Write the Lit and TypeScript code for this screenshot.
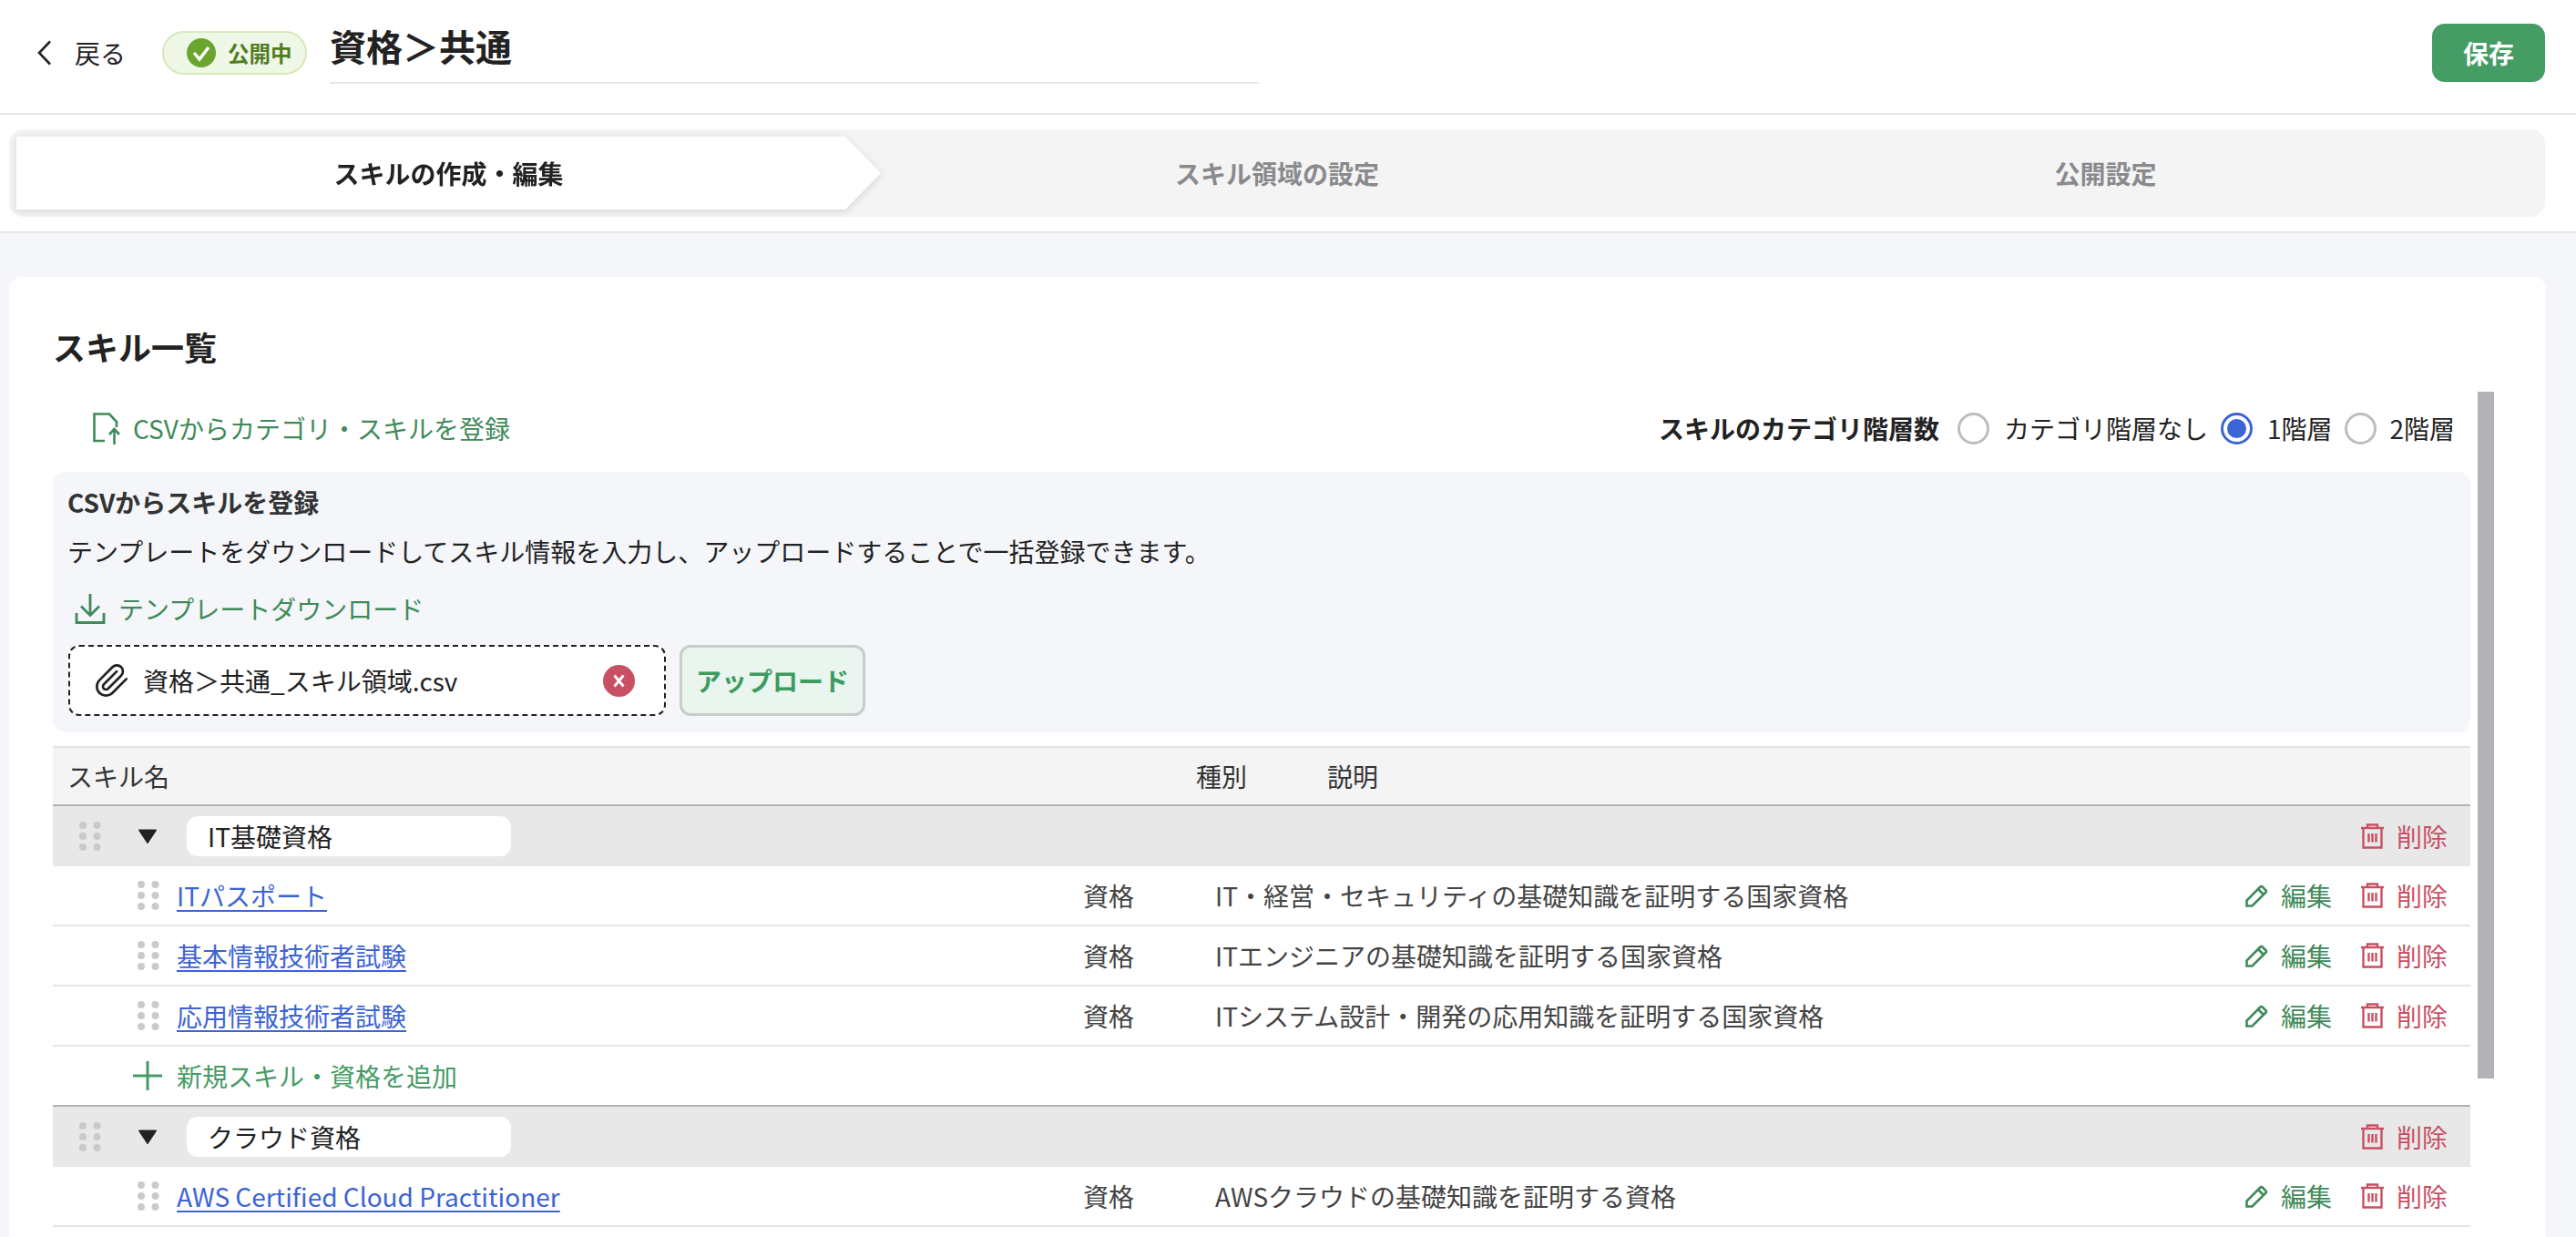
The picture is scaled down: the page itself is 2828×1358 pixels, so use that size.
// skill edit page
import { LitElement, html, css, svg } from 'lit';
import { customElement } from 'lit/decorators.js';

const chevron = html`<svg class="chevron" width="18" height="28" viewBox="0 0 18 28" fill="none" stroke="#222" stroke-width="2.6"><path d="M15 1.5 3 14l12 12.5"/></svg>`;
const checkCircle = html`<svg width="32" height="32" viewBox="0 0 32 32"><circle cx="16" cy="16" r="16" fill="#6aa52f"/><path d="M8 16l6 7 10-13" fill="none" stroke="#fff" stroke-width="3.4"/></svg>`;
const fileUp = html`<svg width="30" height="35" viewBox="0 0 30 35" fill="none" stroke="#3e8a58" stroke-width="2.6"><path d="M13 31H1.5V1.5H18L26 10v6"/><path d="M23.5 35V19"/><path d="M18 24l5.5-6 5.5 6"/></svg>`;
const download = html`<svg width="34" height="33" viewBox="0 0 34 33" fill="none" stroke="#3e8a58" stroke-width="2.8"><path d="M17 0v23"/><path d="M7 13.500l10 10 10-10"/><path d="M2 21v10.500h30V21"/></svg>`;
const clip = html`<svg width="40" height="40" viewBox="0 0 24 24" fill="none" stroke="#222" stroke-width="1.6" stroke-linecap="round"><path d="m21.440 11.050-9.190 9.190a6 6 0 0 1-8.490-8.490l8.570-8.570A4 4 0 1 1 18 8.840l-8.590 8.570a2 2 0 0 1-2.830-2.830l8.490-8.480"/></svg>`;
const clearIcon = html`<svg width="35" height="35" viewBox="0 0 35 35"><circle cx="17.500" cy="17.500" r="17.500" fill="#c94f62"/><path d="M12.500 11.500l10 12M22.500 11.500l-10 12" stroke="#fff" stroke-width="2.800"/></svg>`;
const plus = html`<svg width="32" height="32" viewBox="0 0 32 32" stroke="#459c64" stroke-width="3"><path d="M16 0v32M0 16h32"/></svg>`;
const triangle = html`<svg width="22" height="16" viewBox="0 0 22 16"><path d="M1 1.500a1 1 0 0 1 1-1h18a1 1 0 0 1 1 1L12 15a1 1 0 0 1-2 0z" fill="#222"/></svg>`;
const pencil = html`<svg width="25" height="25" viewBox="0 0 25 25" fill="none" stroke="#3e8a58" stroke-width="2.600"><path d="M1.500 23.500v-6L16.500 2.500a1.500 1.500 0 0 1 2.200 0l3.800 3.800a1.500 1.500 0 0 1 0 2.200L7.500 23.500z"/><path d="M14 5l6 6"/></svg>`;
const trash = html`<svg width="25" height="28" viewBox="0 0 25 28" fill="none" stroke="#c94f62" stroke-width="2.400"><path d="M7 4.500V1.500h11v3"/><path d="M0 5h25"/><path d="M2.500 5v21.500h20V5"/><path d="M8.500 11v9.500M12.500 11v9.500M16.500 11v9.500"/></svg>`;

const dotPositions = [4, 19.5].flatMap((x) => [4, 16, 28].map((y) => [x, y]));
const dots = html`<svg class="dots" width="24" height="32" viewBox="0 0 24 32">${dotPositions.map(([x, y]) => svg`<circle cx=${x} cy=${y} r="4" fill="#c9cacd"/>`)}</svg>`;

const groups = [
	{
		name: 'IT基礎資格',
		skills: [
			{ name: 'ITパスポート', type: '資格', desc: 'IT・経営・セキュリティの基礎知識を証明する国家資格' },
			{ name: '基本情報技術者試験', type: '資格', desc: 'ITエンジニアの基礎知識を証明する国家資格' },
			{ name: '応用情報技術者試験', type: '資格', desc: 'ITシステム設計・開発の応用知識を証明する国家資格' },
		],
		add: true,
	},
	{
		name: 'クラウド資格',
		skills: [{ name: 'AWS Certified Cloud Practitioner', type: '資格', desc: 'AWSクラウドの基礎知識を証明する資格' }],
		add: false,
	},
];

@customElement('app-root')
export class AppRoot extends LitElement {
	static styles = css`
		:host {
			display: block;
			height: 1358px;
			overflow: hidden;
			background: #f4f6fa;
			color: #222;
			font-family: "Noto Sans CJK JP", "Noto Sans", sans-serif;
			font-size: 28px;
			line-height: 40px;
		}
		svg {
			display: block;
			flex: none;
		}
		.header {
			display: flex;
			align-items: center;
			height: 116px;
			padding: 0 34px 8px 40px;
			background: #fff;
			border-bottom: 2px solid #e4e4ea;
		}
		.back {
			display: flex;
			align-items: center;
			gap: 24px;
			width: 138px;
		}
		.badge {
			display: flex;
			align-items: center;
			gap: 13px;
			box-sizing: border-box;
			width: 159px;
			height: 48px;
			padding-left: 25px;
			background: #eff7e6;
			border: 2px solid #d5e9bb;
			border-radius: 24px;
			color: #4f7d1f;
			font-size: 23.5px;
			font-weight: 700;
		}
		.title {
			box-sizing: border-box;
			width: 1020px;
			height: 70px;
			margin: -2px 0 0 25px;
			padding-top: 2px;
			border-bottom: 2px solid #e4e4ea;
			font-size: 40px;
			font-weight: 700;
			line-height: 52px;
		}
		.save {
			margin-left: auto;
			width: 124px;
			height: 64px;
			background: #459c64;
			border-radius: 14px;
			color: #fff;
			font-weight: 700;
			line-height: 64px;
			text-align: center;
		}
		.stepper-wrap {
			padding: 16px 34px 16px 10px;
			background: #fff;
			border-bottom: 2px solid #e4e4ea;
		}
		.stepper {
			display: grid;
			grid-template-columns: 949px 1fr 949px;
			padding: 8px;
			background: #f4f4f4;
			border-radius: 16px;
			color: #8a8a8e;
			font-weight: 700;
			line-height: 80px;
			text-align: center;
		}
		.step-active {
			filter: drop-shadow(0 2px 5px rgba(0, 0, 0, 0.12));
		}
		.step-active div {
			background: #fff;
			color: #222;
			clip-path: polygon(0 0, 910px 0, 949px 50%, 910px 100%, 0 100%);
		}
		.card {
			position: relative;
			margin: 48px 33px 0 10px;
			padding: 50px 83px 0 48px;
			height: 1054px;
			background: #fff;
			border-radius: 14px 14px 0 0;
		}
		h2 {
			margin: 0;
			font-size: 36px;
			font-weight: 700;
			line-height: 52px;
		}
		.thumb {
			position: absolute;
			top: 126px;
			right: 57px;
			width: 18px;
			height: 754px;
			background: #b2b3b7;
		}
		.toolbar {
			display: flex;
			align-items: center;
			justify-content: space-between;
			height: 56px;
			margin-top: 36px;
			margin-bottom: 20px;
			padding: 0 17px 0 44px;
		}
		.link {
			display: flex;
			align-items: center;
			color: #3e8a58;
		}
		.link.upload {
			gap: 14px;
		}
		.link.download {
			gap: 14px;
			margin: 23px 0 20px 7px;
		}
		.radios {
			display: flex;
			align-items: center;
		}
		.radios b {
			margin-right: 20px;
			font-weight: 700;
		}
		.radio {
			display: flex;
			align-items: center;
			gap: 16px;
			margin-right: 14px;
		}
		.radio:last-child {
			gap: 14px;
			margin-right: 0;
		}
		.radio i {
			display: flex;
			align-items: center;
			justify-content: center;
			box-sizing: border-box;
			width: 35px;
			height: 35px;
			border: 3px solid #bcbdc0;
			border-radius: 50%;
		}
		.radio.on i {
			border-color: #3b64d4;
		}
		.radio.on i::after {
			content: '';
			width: 21px;
			height: 21px;
			background: #3b64d4;
			border-radius: 50%;
		}
		.csv {
			height: 286px;
			box-sizing: border-box;
			padding: 13px 17px 0;
			background: #f4f6fa;
			border-radius: 14px;
			color: #333;
		}
		.csv-title {
			margin-left: -1px;
			font-weight: 700;
		}
		.csv-desc {
			margin: 14px 0 0 -1px;
			color: #222;
		}
		.file-row {
			display: flex;
			gap: 15px;
		}
		.file {
			display: flex;
			align-items: center;
			box-sizing: border-box;
			width: 656px;
			height: 78px;
			padding: 0 32px 0 26px;
			background: #fff;
			border: 2px dashed #222;
			border-radius: 12px;
			color: #222;
		}
		.file span {
			flex: 1;
			margin-left: 14px;
		}
		.upload-btn {
			box-sizing: border-box;
			width: 204px;
			height: 78px;
			background: #e9f5ee;
			border: 3px solid #c9ccca;
			border-radius: 12px;
			color: #3e9a60;
			font-weight: 700;
			line-height: 72px;
			text-align: center;
		}
		.table {
			margin-top: 15px;
		}
		.thead {
			display: flex;
			box-sizing: border-box;
			height: 64px;
			padding-left: 16px;
			background: #f4f4f4;
			border-top: 2px solid #e4e4e8;
			color: #333;
			line-height: 62px;
		}
		.thead .h-name {
			width: 1239px;
		}
		.thead .h-type {
			width: 144px;
		}
		.group {
			display: flex;
			align-items: center;
			box-sizing: border-box;
			height: 68px;
			padding: 0 25px 0 29px;
			background: #e8e8e9;
			border-top: 2px solid #b2b3b7;
		}
		.group .tri {
			margin-left: 40px;
		}
		.group .pill {
			box-sizing: border-box;
			width: 356px;
			height: 44px;
			margin-left: 32px;
			padding-left: 23px;
			background: #fff;
			border-radius: 12px;
			line-height: 44px;
		}
		.row {
			display: flex;
			align-items: center;
			box-sizing: border-box;
			height: 66px;
			padding: 0 25px 0 93px;
			border-bottom: 2px solid #e4e4ea;
			color: #444;
		}
		.row a {
			width: 995px;
			margin-left: 19px;
			color: #3b64d4;
			text-decoration: underline;
			text-decoration-thickness: 2px;
			text-underline-offset: 4px;
		}
		.row .type {
			width: 145px;
		}
		.actions {
			display: flex;
			margin-left: auto;
		}
		.act {
			display: flex;
			align-items: center;
			gap: 14px;
			color: #c94f62;
		}
		.act.edit {
			margin-right: 32px;
			color: #3e8a58;
		}
		.add {
			display: flex;
			align-items: center;
			gap: 16px;
			box-sizing: border-box;
			height: 64px;
			padding-left: 88px;
			color: #459c64;
		}
	`;

	renderDelete() {
		return html`<div class="act">${trash}<span>削除</span></div>`;
	}

	renderGroup(group) {
		return html`
			<div class="group">
				${dots}
				<div class="tri">${triangle}</div>
				<div class="pill">${group.name}</div>
				<div class="actions">${this.renderDelete()}</div>
			</div>
			${group.skills.map(
				(skill) => html`
					<div class="row">
						${dots}
						<a href="#">${skill.name}</a>
						<span class="type">${skill.type}</span>
						<span>${skill.desc}</span>
						<div class="actions">
							<div class="act edit">${pencil}<span>編集</span></div>
							${this.renderDelete()}
						</div>
					</div>
				`
			)}
			${group.add ? html`<div class="add">${plus}<span>新規スキル・資格を追加</span></div>` : ''}
		`;
	}

	render() {
		return html`
			<div class="header">
				<div class="back">${chevron}<span>戻る</span></div>
				<div class="badge">${checkCircle}<span>公開中</span></div>
				<div class="title">資格＞共通</div>
				<div class="save">保存</div>
			</div>
			<div class="stepper-wrap">
				<div class="stepper">
					<div class="step-active"><div>スキルの作成・編集</div></div>
					<div>スキル領域の設定</div>
					<div>公開設定</div>
				</div>
			</div>
			<div class="card">
				<h2>スキル一覧</h2>
				<div class="thumb"></div>
				<div class="toolbar">
					<div class="link upload">${fileUp}<span>CSVからカテゴリ・スキルを登録</span></div>
					<div class="radios">
						<b>スキルのカテゴリ階層数</b>
						<div class="radio"><i></i>カテゴリ階層なし</div>
						<div class="radio on"><i></i>1階層</div>
						<div class="radio"><i></i>2階層</div>
					</div>
				</div>
				<div class="csv">
					<div class="csv-title">CSVからスキルを登録</div>
					<div class="csv-desc">テンプレートをダウンロードしてスキル情報を入力し、アップロードすることで一括登録できます。</div>
					<div class="link download">${download}<span>テンプレートダウンロード</span></div>
					<div class="file-row">
						<div class="file">${clip}<span>資格＞共通_スキル領域.csv</span>${clearIcon}</div>
						<div class="upload-btn">アップロード</div>
					</div>
				</div>
				<div class="table">
					<div class="thead">
						<div class="h-name">スキル名</div>
						<div class="h-type">種別</div>
						<div>説明</div>
					</div>
					${groups.map((g) => this.renderGroup(g))}
				</div>
			</div>
		`;
	}
}
